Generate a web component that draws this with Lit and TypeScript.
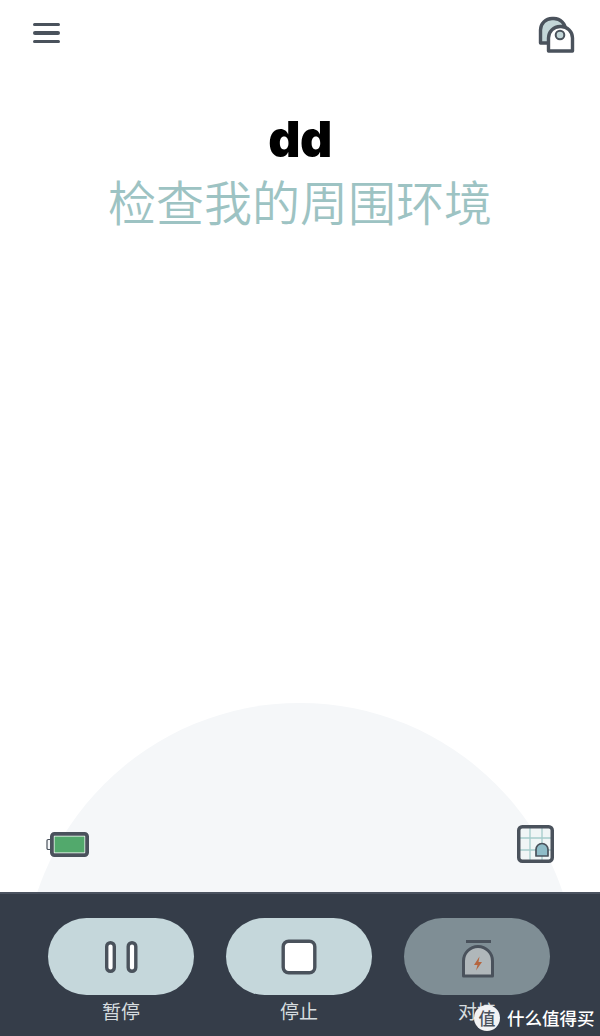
import { LitElement, html, css, svg } from "lit";
import { customElement } from "lit/decorators.js";

const INK = "#4a525c";

const robotIcon = svg`<svg width="38" height="38" viewBox="0 0 38 38" fill="none">
  <path d="M3.5 28 V15 a11.5 11.5 0 0 1 11.5 -11.5 h2 a11.5 11.5 0 0 1 11.5 11.5 V28 Z" fill="#c3d6d8" stroke="${INK}" stroke-width="3.4" stroke-linejoin="round"/>
  <path d="M11.5 36 V23 a11.5 11.5 0 0 1 11.5 -11.5 h1 a11.5 11.5 0 0 1 11.5 11.5 V36 Z" fill="#fff" stroke="${INK}" stroke-width="3.4" stroke-linejoin="round"/>
  <circle cx="23" cy="20" r="4.3" fill="#c3d6d8" stroke="${INK}" stroke-width="2"/>
</svg>`;

const batteryIcon = svg`<svg width="44" height="27" viewBox="0 0 44 27" fill="none">
  <rect x="1" y="8.5" width="4" height="10" rx="1.2" fill="#f4f6f8" stroke="${INK}" stroke-width="1.2"/>
  <rect x="5.9" y="2.9" width="35.2" height="21.2" rx="2.5" fill="#fff" stroke="${INK}" stroke-width="3.8"/>
  <rect x="8.5" y="5.5" width="30" height="16" fill="#52a96c"/>
</svg>`;

const mapIcon = svg`<svg width="40" height="40" viewBox="0 0 40 40" fill="none">
  <rect x="2.75" y="2.75" width="33.5" height="34.5" rx="3.5" fill="#f0f5f6"/>
  <path d="M14 3 V37 M26 3 V37 M3 14 H36 M3 26 H36" stroke="#a5cbcb" stroke-width="1.3"/>
  <rect x="2.75" y="2.75" width="33.5" height="34.5" rx="3.5" stroke="${INK}" stroke-width="3.5"/>
  <path d="M20 32 V25.5 a6 6 0 0 1 12 0 V32 Z" fill="#8fbcc8" stroke="${INK}" stroke-width="1.7" stroke-linejoin="round"/>
</svg>`;

const pauseIcon = svg`<svg width="34" height="34" viewBox="0 0 34 34" fill="none">
  <rect x="2.7" y="2.7" width="7.6" height="28.6" rx="3.8" fill="#fff" stroke="${INK}" stroke-width="3.4"/>
  <rect x="24.2" y="2.7" width="7.6" height="28.6" rx="3.8" fill="#fff" stroke="${INK}" stroke-width="3.4"/>
</svg>`;

const stopIcon = svg`<svg width="36" height="36" viewBox="0 0 36 36" fill="none">
  <rect x="2.2" y="2.2" width="31.6" height="31.6" rx="5.5" fill="#fff" stroke="${INK}" stroke-width="3.4"/>
</svg>`;

const dockIcon = svg`<svg width="36" height="42" viewBox="0 0 36 42" fill="none">
  <path d="M7 5.5 H32" stroke="${INK}" stroke-width="3"/>
  <path d="M4.5 40 V25 a14.5 14.5 0 0 1 29 0 V40 Z" fill="#b0b7ba" stroke="${INK}" stroke-width="3" stroke-linejoin="round"/>
  <path d="M20.5 20.5 L15 29 H18.5 L17 34.5 L23 26 H19.5 Z" fill="#b5653f"/>
</svg>`;

@customElement("app-root")
export class AppRoot extends LitElement {
  static styles = css`
    :host {
      display: flex;
      flex-direction: column;
      width: 600px;
      height: 1036px;
      position: relative;
      overflow: hidden;
      background: #fff;
      font-family: "Noto Sans CJK SC", "Noto Sans", sans-serif;
    }
    .main {
      flex: 1;
      position: relative;
      display: flex;
      flex-direction: column;
      overflow: hidden;
      padding: 15px 25px 0 33px;
    }
    .dome {
      position: absolute;
      left: 23px;
      top: 703px;
      width: 554px;
      height: 554px;
      border-radius: 50%;
      background: #f5f7f9;
    }
    .topbar {
      display: flex;
      justify-content: space-between;
      align-items: flex-start;
      position: relative;
    }
    .menu {
      width: 27px;
      display: flex;
      flex-direction: column;
      gap: 5px;
      padding-top: 7.5px;
    }
    .menu span {
      height: 3.5px;
      border-radius: 2px;
      background: #4a525c;
    }
    .robot svg { display: block; }
    .heading {
      position: relative;
      text-align: center;
      margin: 57px -25px 0 -33px;
    }
    .name {
      font-family: Inter, sans-serif;
      font-weight: 900;
      font-size: 50px;
      line-height: 58px;
      color: #000;
      letter-spacing: -0.5px;
    }
    .status {
      font-size: 48px;
      line-height: 60px;
      font-weight: 350;
      color: #9dc3c3;
      margin-top: 2px;
    }
    .spacer { flex: 1; }
    .status-row {
      position: relative;
      display: flex;
      justify-content: space-between;
      align-items: center;
      padding: 0 19px 28px 13px;
    }
    .status-row svg { display: block; }
    .bar {
      height: 144px;
      box-sizing: border-box;
      border-top: 2px solid #4b5360;
      background: #353d49;
      display: flex;
      justify-content: center;
      gap: 32px;
      padding: 24px 2px 0 0;
      position: relative;
    }
    .action {
      width: 146px;
      display: flex;
      flex-direction: column;
      align-items: center;
      color: #d6dcdf;
      font-size: 19px;
      line-height: 26px;
      gap: 3px;
    }
    .pill {
      width: 146px;
      height: 77px;
      border-radius: 39px;
      background: #c5d7db;
      display: flex;
      align-items: center;
      justify-content: center;
    }
    .pill.off { background: #7f8e95; }
    .pill svg { display: block; }
    .mark {
      position: absolute;
      left: 474px;
      top: 1005px;
      display: flex;
      align-items: center;
      gap: 7px;
      color: #fff;
      font-size: 17.5px;
      line-height: 26px;
      font-weight: 500;
      white-space: nowrap;
    }
    .mark i {
      width: 26px;
      height: 26px;
      border-radius: 50%;
      background: #f2f3f4;
      color: #4a525c;
      font-style: normal;
      font-size: 17px;
      line-height: 26px;
      text-align: center;
    }
  `;

  render() {
    return html`
      <div class="main">
        <div class="dome"></div>
        <div class="topbar">
          <div class="menu"><span></span><span></span><span></span></div>
          <div class="robot">${robotIcon}</div>
        </div>
        <div class="heading">
          <div class="name">dd</div>
          <div class="status">检查我的周围环境</div>
        </div>
        <div class="spacer"></div>
        <div class="status-row">${batteryIcon}${mapIcon}</div>
      </div>
      <div class="bar">
        <div class="action"><div class="pill">${pauseIcon}</div>暂停</div>
        <div class="action"><div class="pill">${stopIcon}</div>停止</div>
        <div class="action"><div class="pill off">${dockIcon}</div>对接</div>
      </div>
      <div class="mark"><i>值</i>什么值得买</div>
    `;
  }
}
